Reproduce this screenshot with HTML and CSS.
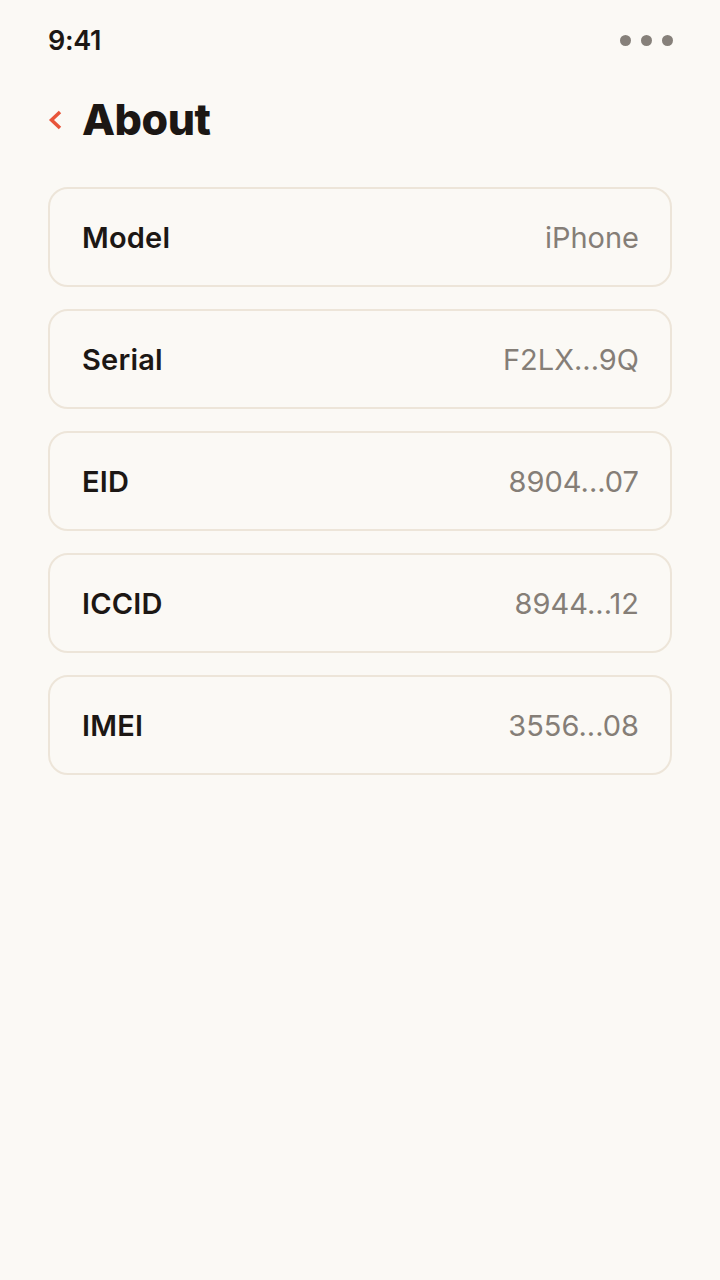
FILE: index.html
```html
<!DOCTYPE html>
<html lang="en">
<head>
    <meta charset="UTF-8">
    <meta name="viewport" content="width=device-width, initial-scale=1.0">
    <title>About</title>
    <link rel="stylesheet" href="styles.css">
</head>
<body>

    <div class="screen">
        <div class="status-bar">
            <span class="time">9:41</span>
            <span class="dots"><i></i><i></i><i></i></span>
        </div>

        <div class="header">
            <svg class="back" width="14" height="20" viewBox="0 0 14 20">
                <path d="M12 2 L3.5 10 L12 18" fill="none" stroke="#e8553a" stroke-width="3.5" stroke-linecap="butt" stroke-linejoin="miter"/>
            </svg>
            <h1>About</h1>
        </div>

        <div class="list">
            <div class="row"><span class="label">Model</span><span class="value">iPhone</span></div>
            <div class="row"><span class="label">Serial</span><span class="value">F2LX...9Q</span></div>
            <div class="row"><span class="label">EID</span><span class="value">8904...07</span></div>
            <div class="row"><span class="label">ICCID</span><span class="value">8944...12</span></div>
            <div class="row"><span class="label">IMEI</span><span class="value">3556...08</span></div>
        </div>
    </div>

</body>
</html>
```

FILE: styles.css
```css
body {
    margin: 0;
    background-color: #fbf9f5;
    font-family: Inter, "Noto Sans", sans-serif;
    color: #1c1714;
}

.screen {
    padding: 0 48px;
}

.status-bar {
    height: 80px;
    display: flex;
    align-items: center;
    justify-content: space-between;
}

.time {
    font-size: 27px;
    font-weight: 600;
    letter-spacing: -0.3px;
}

.dots {
    display: flex;
    gap: 10px;
    margin-right: -1px;
}

.dots i {
    width: 11px;
    height: 11px;
    border-radius: 50%;
    background-color: #86807a;
}

.header {
    height: 78px;
    display: flex;
    align-items: center;
    gap: 20px;
}

.back {
    flex-shrink: 0;
    margin-top: 2px;
}

h1 {
    margin: 0;
    font-size: 43px;
    font-weight: 800;
    letter-spacing: -0.5px;
}

.list {
    margin-top: 29px;
    display: flex;
    flex-direction: column;
    gap: 22px;
}

.row {
    height: 96px;
    display: flex;
    align-items: center;
    justify-content: space-between;
    padding: 0 31px 0 32px;
    border: 2px solid #ede5d9;
    border-radius: 20px;
}

.label {
    font-size: 29px;
    font-weight: 600;
    letter-spacing: 0.2px;
}

.value {
    font-size: 29px;
    color: #857e77;
}
```
